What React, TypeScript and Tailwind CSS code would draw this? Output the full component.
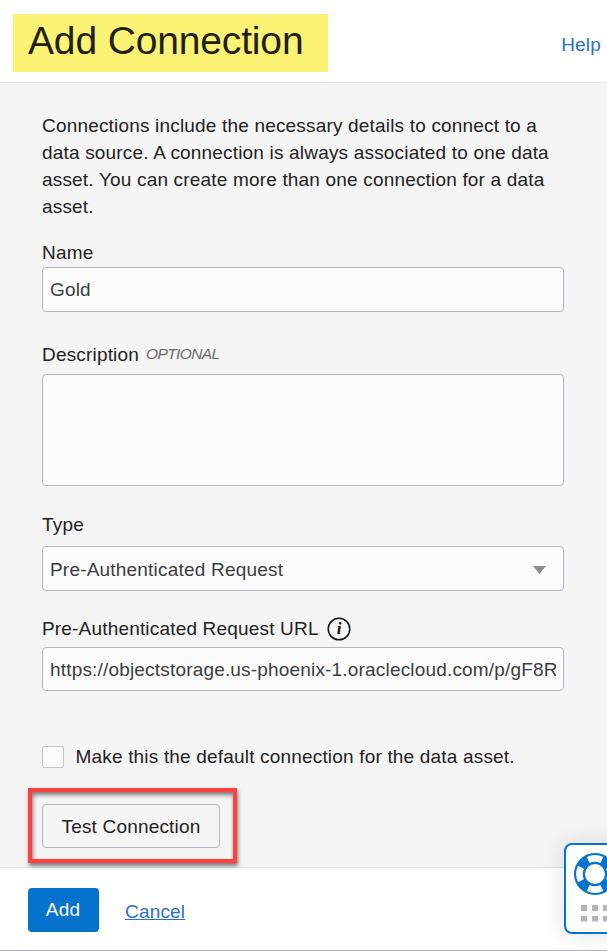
import type { ReactNode } from "react";

function Label({ children, className }: { children: ReactNode; className: string }) {
  return <div className={`flex items-center leading-[22px] ${className}`}>{children}</div>;
}

const field =
  "w-[522px] overflow-hidden whitespace-nowrap rounded-[4px] border border-[#b1b6c2] bg-[#fcfcfc] px-[7px] pt-[2px] text-[#3a3d42] flex items-center";

function InfoIcon() {
  return (
    <svg width="24" height="24" viewBox="0 0 24 24" className="ml-[8px]">
      <circle cx="12" cy="12" r="10.8" fill="none" stroke="#161513" strokeWidth="1.5" />
      <text
        x="12"
        y="17"
        textAnchor="middle"
        fill="#161513"
        className="font-['Liberation_Serif',serif] text-[17px] font-bold italic tracking-normal"
      >
        i
      </text>
    </svg>
  );
}

function HelpWidget() {
  return (
    <div className="absolute left-[564px] top-[843px] h-[91px] w-[70px] rounded-[8px] border-2 border-[#0572ce] bg-white shadow-[0_0_24px_rgba(0,0,0,0.12)]">
      <svg width="66" height="87" viewBox="0 0 66 87">
        <circle cx="29" cy="29" r="15.5" fill="none" stroke="#0572ce" strokeWidth="11" />
        <circle
          cx="29"
          cy="29"
          r="15.6"
          fill="none"
          stroke="#fff"
          strokeWidth="6.6"
          pathLength="360"
          strokeDasharray="52 38"
          strokeDashoffset="26"
        />
        <path
          d="M15 60h6v6h-6z M26 60h6v6h-6z M37 60h6v6h-6z M15 71h6v5.500h-6z M26 71h6v5.500h-6z M37 71h6v5.500h-6z"
          fill="#b1b6bc"
        />
      </svg>
    </div>
  );
}

export default function App() {
  return (
    <div className="relative flex h-[951px] w-[607px] flex-col overflow-hidden bg-white font-['Liberation_Sans',Arial,sans-serif] text-[19px] tracking-[0.18px] text-[#24211e]">
      <header className="flex h-[83px] shrink-0 items-start justify-between border-b border-[#e1e1e1] pl-[13px] pr-[6px]">
        <h1 className="mt-[14px] h-[58px] w-[315px] bg-[#fcf274] pl-[15px] text-[39px] leading-[54px] tracking-[-0.15px] text-[#201f12]">
          Add Connection
        </h1>
        <a className="mt-[34px] leading-[22px] text-[#2a71cb]">Help</a>
      </header>

      <main className="flex h-[785px] shrink-0 flex-col border-b border-[#e1e1e1] bg-[#f5f5f5] pl-[42px]">
        <p className="mt-[29px] whitespace-nowrap leading-[27px]">
          Connections include the necessary details to connect to a
          <br />
          data source. A connection is always associated to one data
          <br />
          asset. You can create more than one connection for a data
          <br />
          asset.
        </p>

        <Label className="mb-[2px] mt-[21px] h-[24px]">Name</Label>
        <div className={`${field} h-[45px]`}>Gold</div>

        <Label className="mt-[31px] h-[24px]">
          Description
          <span className="mb-[2px] ml-[7px] text-[15.5px] italic tracking-[-0.6px] text-[#6c6a69]">OPTIONAL</span>
        </Label>
        <div className={`${field} mt-[7px] h-[112px]`} />

        <Label className="mt-[27px] h-[24px]">Type</Label>
        <div className={`${field} mt-[9px] h-[45px] justify-between`}>
          <span className="pt-[2px] tracking-[0.2px]">Pre-Authenticated Request</span>
          <svg width="13" height="8" className="mr-[10px]">
            <path d="M0 0h13L6.500 8z" fill="#8b8d90" />
          </svg>
        </div>

        <Label className="mt-[26px] h-[24px]">
          Pre-Authenticated Request URL
          <InfoIcon />
        </Label>
        <div className={`${field} mt-[6px] h-[44px]`}>
          <span className="block w-[506px] overflow-hidden">
            https://objectstorage.us-phoenix-1.oraclecloud.com/p/gF8R
          </span>
        </div>

        <div className="mt-[55px] flex h-[22px] items-center">
          <span className="h-[22px] w-[22px] rounded-[2px] border border-[#c4c4c4] bg-[#fcfcfc]" />
          <span className="ml-[11.5px]">Make this the default connection for the data asset.</span>
        </div>

        <div className="-ml-[14px] mt-[20px] h-[75px] w-[209px] shrink-0 border-4 border-[#ff4040] pl-[10px] pt-[12px] shadow-[1px_3px_4px_rgba(0,0,0,0.5),inset_1px_3px_4px_rgba(0,0,0,0.5)]">
          <div className="flex h-[44px] w-[178px] items-center justify-center rounded-[4px] border border-[#b1b6c2] pt-[2px]">
            Test Connection
          </div>
        </div>
      </main>

      <footer className="flex h-[83px] shrink-0 items-start border-b border-[#b1b6c2] pl-[28px] pt-[20px]">
        <div className="flex h-[44px] w-[71px] justify-center rounded-[4px] bg-[#0572ce] pr-[1px] leading-[44px] text-white">Add</div>
        <a className="ml-[26px] mt-[13px] leading-[22px] text-[#2a71cb] underline decoration-1">Cancel</a>
      </footer>

      <HelpWidget />
    </div>
  );
}
